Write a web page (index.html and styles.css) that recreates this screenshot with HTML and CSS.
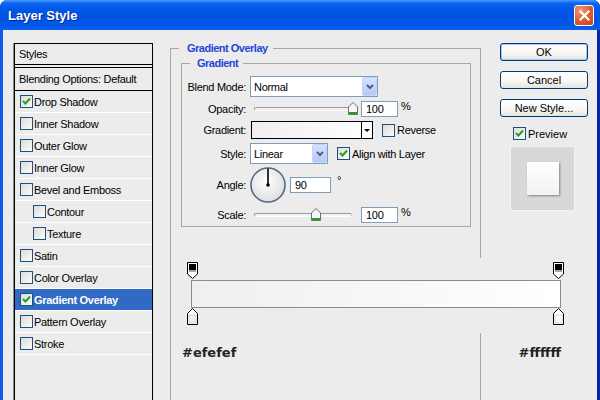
FILE: index.html
```html
<!DOCTYPE html>
<html>
	<head>
		<meta charset="UTF-8">
		<title>Layer Style</title>
		<link rel="stylesheet" href="styles.css">
	</head>
	<body>
		<div class="window">
			<div class="titlebar">
				<span class="title">Layer Style</span>
				<span class="close">
					<svg width="13" height="13" viewBox="0 0 13 13"><path d="M2.5 2.5 L10.5 10.5 M10.5 2.5 L2.5 10.5" stroke="#fff" stroke-width="2.2" stroke-linecap="square"/></svg>
				</span>
			</div>

			<div class="content">
				<!-- styles list -->
				<div class="stylesPanel">
					<div class="panelHead">Styles</div>
					<ul class="styleList">
						<li class="blending">Blending Options: Default</li>
						<li><span class="cb"><svg width="11" height="11" viewBox="0 0 11 11"><polyline points="2,5 4.5,7.5 9,2.5" fill="none" stroke="#21a121" stroke-width="2"/></svg></span>Drop Shadow</li>
						<li><span class="cb"></span>Inner Shadow</li>
						<li><span class="cb"></span>Outer Glow</li>
						<li><span class="cb"></span>Inner Glow</li>
						<li><span class="cb"></span>Bevel and Emboss</li>
						<li class="sub"><span class="cb"></span>Contour</li>
						<li class="sub"><span class="cb"></span>Texture</li>
						<li><span class="cb"></span>Satin</li>
						<li><span class="cb"></span>Color Overlay</li>
						<li class="sel"><span class="cb"><svg width="11" height="11" viewBox="0 0 11 11"><polyline points="2,5 4.5,7.5 9,2.5" fill="none" stroke="#21a121" stroke-width="2"/></svg></span>Gradient Overlay</li>
						<li><span class="cb"></span>Pattern Overlay</li>
						<li><span class="cb"></span>Stroke</li>
					</ul>
				</div>

				<!-- settings -->
				<div class="main">
					<fieldset class="group outer">
						<legend>Gradient Overlay</legend>
						<fieldset class="group inner">
							<legend>Gradient</legend>
							<div class="form">
								<label>Blend Mode:</label>
								<div class="select wide"><span>Normal</span><i class="arrow"><svg width="8" height="6" viewBox="0 0 8 6"><polyline points="1,1 4,4 7,1" fill="none" stroke="#4d6185" stroke-width="2"/></svg></i></div>

								<label>Opacity:</label>
								<div class="row">
									<div class="slider"><div class="track"></div><span class="thumb" style="left: 94px"><svg width="10" height="13" viewBox="0 0 10 13"><path d="M0.5 5 L5 0.5 L9.5 5 V12.5 H0.5 Z" fill="#f6f6f6" stroke="#6f6f6f"/><rect x="1" y="10" width="8" height="2" fill="#21a121"/></svg></span></div>
									<span class="num">100</span><span class="unit">%</span>
								</div>

								<label>Gradient:</label>
								<div class="row">
									<div class="gradPick"><span class="drop"><i></i></span></div>
									<span class="check reverse"><span class="cb"></span>Reverse</span>
								</div>

								<label>Style:</label>
								<div class="row">
									<div class="select narrow"><span>Linear</span><i class="arrow"><svg width="8" height="6" viewBox="0 0 8 6"><polyline points="1,1 4,4 7,1" fill="none" stroke="#4d6185" stroke-width="2"/></svg></i></div>
									<span class="check align"><span class="cb"><svg width="11" height="11" viewBox="0 0 11 11"><polyline points="2,5 4.5,7.5 9,2.5" fill="none" stroke="#21a121" stroke-width="2"/></svg></span>Align with Layer</span>
								</div>

								<label>Angle:</label>
								<div class="row">
									<svg class="dial" width="36" height="36" viewBox="0 0 36 36">
										<defs>
											<radialGradient id="dialFill" cx="45%" cy="40%" r="60%">
												<stop offset="0" stop-color="#ffffff"/>
												<stop offset="1" stop-color="#dedede"/>
											</radialGradient>
										</defs>
										<circle cx="18" cy="18" r="17" fill="url(#dialFill)" stroke="#566788" stroke-width="1.6"/>
										<line x1="18" y1="18" x2="18" y2="1.5" stroke="#000" stroke-width="1.6"/>
										<circle cx="18" cy="18" r="1.8" fill="#000"/>
									</svg>
									<span class="num angle">90</span><span class="unit deg">°</span>
								</div>

								<label>Scale:</label>
								<div class="row">
									<div class="slider"><div class="track"></div><span class="thumb" style="left: 57px"><svg width="10" height="13" viewBox="0 0 10 13"><path d="M0.5 5 L5 0.5 L9.5 5 V12.5 H0.5 Z" fill="#f6f6f6" stroke="#6f6f6f"/><rect x="1" y="10" width="8" height="2" fill="#21a121"/></svg></span></div>
									<span class="num">100</span><span class="unit">%</span>
								</div>
							</div>
						</fieldset>
					</fieldset>
				</div>

				<!-- buttons -->
				<div class="side">
					<div class="btn default">OK</div>
					<div class="btn">Cancel</div>
					<div class="btn">New Style...</div>
					<span class="check preview"><span class="cb"><svg width="11" height="11" viewBox="0 0 11 11"><polyline points="2,5 4.5,7.5 9,2.5" fill="none" stroke="#21a121" stroke-width="2"/></svg></span>Preview</span>
					<div class="previewBox"><div class="swatch"></div></div>
				</div>

				<!-- gradient editor laid over the dialog -->
				<div class="gradEditor">
					<div class="editorArea">
						<div class="stops">
							<svg width="11" height="17" viewBox="0 0 11 17"><path d="M0.5 0.5 H10.5 V12 L5.5 16.5 L0.5 12 Z" fill="#fff" stroke="#000"/><rect x="2" y="2" width="7" height="6" fill="#000"/><rect x="2" y="8" width="7" height="2" fill="#a4a4a4"/></svg>
							<svg width="11" height="17" viewBox="0 0 11 17"><path d="M0.5 0.5 H10.5 V12 L5.5 16.5 L0.5 12 Z" fill="#fff" stroke="#000"/><rect x="2" y="2" width="7" height="6" fill="#000"/><rect x="2" y="8" width="7" height="2" fill="#a4a4a4"/></svg>
						</div>
						<div class="bar"></div>
						<div class="stops">
							<svg width="11" height="17" viewBox="0 0 11 17"><path d="M5.5 0.5 L10.5 5.5 V16.5 H0.5 V5.5 Z" fill="#fff" stroke="#000"/><rect x="2" y="7" width="7" height="8" fill="#efefef" stroke="#bdbdbd" stroke-width="0.6"/></svg>
							<svg width="11" height="17" viewBox="0 0 11 17"><path d="M5.5 0.5 L10.5 5.5 V16.5 H0.5 V5.5 Z" fill="#fff" stroke="#000"/><rect x="2" y="7" width="7" height="8" fill="#ffffff" stroke="#bdbdbd" stroke-width="0.6"/></svg>
						</div>
					</div>
					<div class="hexRow">
						<span>#efefef</span>
						<span>#ffffff</span>
					</div>
				</div>
			</div>
		</div>
	</body>
</html>
```

FILE: styles.css
```css
*{
	margin: 0;
	padding: 0;
	box-sizing: border-box;
}
body{
	font: 11px "Liberation Sans", Arial, sans-serif;
	letter-spacing: -0.3px;
	color: #000;
	background: #fff;
}

.window{
	width: 600px;
	height: 400px;
	overflow: hidden;
	border-radius: 7px 7px 0 0;
	background: linear-gradient(90deg, #0a5cec, #0846d8 50%, #0026b2);
}
.titlebar{
	height: 30px;
	display: flex;
	align-items: center;
	justify-content: space-between;
	padding: 0 6px 0 8px;
	background: linear-gradient(#4a9bff 0, #0e68f2 3px, #0059e8 8px, #0052df 55%, #0058ea 85%, #0a60f0 100%);
}
.title{
	color: #fff;
	font: bold 13px "Liberation Sans", Arial, sans-serif;
	letter-spacing: 0;
	text-shadow: 1px 1px 0 #0b2290;
}
.close{
	width: 20px;
	height: 21px;
	border: 1px solid #fff;
	border-radius: 3px;
	background: radial-gradient(circle at 30% 25%, #f29a7a, #dc5a2c 55%, #c2421b);
	display: flex;
	align-items: center;
	justify-content: center;
}

.content{
	position: relative;
	display: flex;
	align-items: flex-start;
	height: 370px;
	margin: 0 3px;
	background: #ececec;
	overflow: hidden;
}

/* left list */
.stylesPanel{
	width: 139px;
	height: 380px;
	margin: 13px 0 0 11px;
	border: 1px solid #000;
	box-shadow: -1px 0 0 #8d8d8d;
}
.panelHead{
	height: 21px;
	line-height: 20px;
	padding-left: 4px;
	border-bottom: 1px solid #000;
}
.styleList{
	list-style: none;
	margin-top: 2px;
	border-top: 1px solid #000;
}
.styleList li{
	height: 22px;
	display: flex;
	align-items: center;
	padding-left: 5px;
	border-bottom: 1px solid #fff;
}
.styleList li.blending{
	height: 23px;
	padding-left: 4px;
	border-bottom: 1px solid #000;
}
.styleList li.sub{
	padding-left: 18px;
}
.styleList li.sel{
	background: #316ac5;
	color: #fff;
	font-weight: bold;
}
.styleList li .cb{
	margin-right: 1px;
}

.cb{
	width: 13px;
	height: 13px;
	flex: none;
	display: inline-flex;
	align-items: center;
	justify-content: center;
	border: 1px solid #1c5180;
	background: linear-gradient(135deg, #dcdcd7, #fbfbf9);
}

/* middle groups */
.main{
	margin: 12px 0 0 17px;
}
.group{
	border: 1px solid #aca899;
}
.group > legend{
	color: #2146d8;
	font-weight: bold;
	letter-spacing: -0.5px;
	line-height: 13px;
}
.outer{
	width: 311px;
	height: 400px;
	padding: 0 9px 0 10px;
}
.outer > legend{
	margin-left: -2px;
	padding: 0 5px 0 8px;
}
.inner{
	width: 290px;
	margin-top: 2px;
	padding: 0 0 3px 0;
}
.inner > legend{
	margin-left: 8px;
	padding: 0 5px 0 7px;
}

.form{
	display: grid;
	grid-template-columns: 64px auto;
	grid-template-rows: 21px 17px 20px 21px 36px 17px;
	row-gap: 3px;
	column-gap: 4px;
	align-items: center;
	margin-top: 6px;
}
.form label{
	text-align: right;
}
.row{
	display: flex;
	align-items: center;
}

.select{
	height: 21px;
	display: flex;
	align-items: center;
	border: 1px solid #7f9db9;
	background: #fff;
}
.select span{
	flex: 1;
	padding-left: 3px;
}
.select .arrow{
	width: 15px;
	height: 19px;
	display: flex;
	align-items: center;
	justify-content: center;
	border: 1px solid #c6d5fc;
	border-radius: 2px;
	background: linear-gradient(#d6e2fd, #b4c8f6);
}
.wide{
	width: 128px;
}
.narrow{
	width: 78px;
}

.slider{
	position: relative;
	width: 98px;
	height: 13px;
	margin: 0 9px 0 4px;
}
.track{
	height: 4px;
	margin-top: 5px;
	border: 1px solid;
	border-color: #9c9c9c #c4c4c4 #fff #9c9c9c;
	border-radius: 2px;
	background: #f2f2f2;
}
.thumb{
	position: absolute;
	top: 0;
	display: block;
	height: 13px;
}
.thumb svg{
	display: block;
}

.num{
	width: 37px;
	height: 16px;
	line-height: 14px;
	padding-left: 4px;
	border: 1px solid #7f9db9;
	background: #fff;
}
.num.angle{
	width: 41px;
	margin-left: 4px;
}
.unit{
	margin-left: 3px;
	align-self: flex-start;
	margin-top: -1px;
}
.unit.deg{
	margin-left: 6px;
	align-self: center;
	margin-top: -10px;
}

.gradPick{
	width: 122px;
	height: 18px;
	margin-left: 1px;
	display: flex;
	border: 1px solid #000;
	background: linear-gradient(90deg, #efefef, #fff);
}
.gradPick .drop{
	width: 11px;
	margin-left: auto;
	display: flex;
	align-items: center;
	justify-content: center;
	border-left: 1px solid #000;
	background: #fff;
}
.gradPick .drop i{
	border-left: 3px solid transparent;
	border-right: 3px solid transparent;
	border-top: 3px solid #000;
}

.check{
	display: flex;
	align-items: center;
}
.check .cb{
	margin-right: 2px;
}
.check.reverse,
.check.align{
	margin-left: 9px;
}
.dial{
	display: block;
}

/* right column */
.side{
	width: 88px;
	margin: 13px 0 0 19px;
	display: flex;
	flex-direction: column;
	align-items: center;
}
.btn{
	width: 88px;
	height: 18px;
	margin-bottom: 10px;
	line-height: 16px;
	text-align: center;
	letter-spacing: 0;
	border: 1px solid #003c74;
	border-radius: 3px;
	background: linear-gradient(#fff 0, #f7f6f2 60%, #e4e2da 100%);
}
.btn.default{
	box-shadow: inset 0 0 0 1px #a9c6f5;
}
.check.preview{
	align-self: flex-start;
	margin-left: 13px;
	letter-spacing: 0;
}
.previewBox{
	align-self: flex-start;
	width: 65px;
	height: 65px;
	margin: 6px 0 0 10px;
	display: flex;
	align-items: center;
	justify-content: center;
	border: 1px solid #f4f4f4;
	background: #d8d8d8;
}
.swatch{
	width: 32px;
	height: 33px;
	background: linear-gradient(#fff, #f2f2f2);
	box-shadow: 1px 1px 2px rgba(0, 0, 0, .4);
}

/* gradient editor */
.gradEditor{
	position: absolute;
	left: 168px;
	top: 228px;
	width: 426px;
}
.editorArea{
	height: 75px;
	padding: 4px 0 0 20px;
	background: #ececec;
}
.stops{
	width: 377px;
	height: 17px;
	margin-left: -4px;
	display: flex;
	justify-content: space-between;
}
.stops svg{
	display: block;
}
.bar{
	width: 370px;
	height: 28px;
	margin: 1px 0 0 0;
	border: 1px solid #8c8c8c;
	background: linear-gradient(90deg, #efefef, #fff);
}
.hexRow{
	width: 379px;
	margin: 12px 0 0 11px;
	display: flex;
	justify-content: space-between;
	font: bold 13px "DejaVu Sans", Verdana, sans-serif;
	letter-spacing: 0;
	color: #222;
}
```
